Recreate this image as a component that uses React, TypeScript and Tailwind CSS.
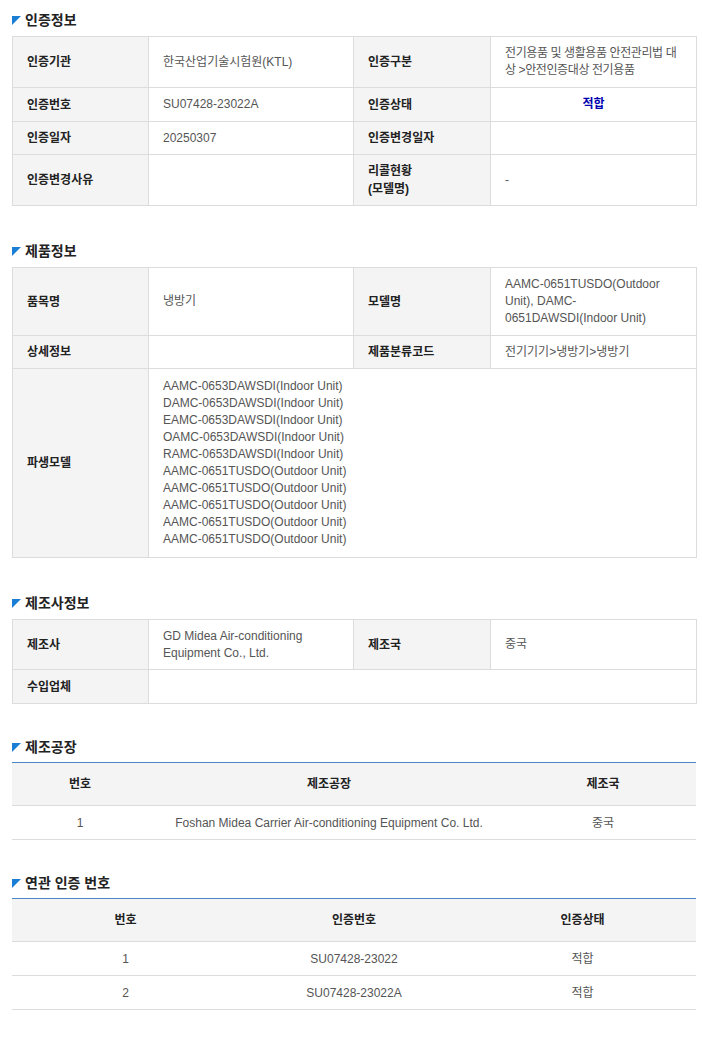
import React from "react";

const F = { fontFamily: '"Liberation Sans","Noto Sans CJK KR",sans-serif' };

function Title({ t }: { t: string }) {
  return (
    <div className="flex items-center gap-[4px] h-[20px] text-[14px] font-bold text-[#222]">
      <svg width="9" height="9" viewBox="0 0 9 9"><polygon points="0,0 9,0 0,9" fill="#1a7fd4" /></svg>
      {t}
    </div>
  );
}

const L = "bg-[#f4f4f4] border border-[#dcdcdc] px-[14px] text-[12px] font-bold text-[#222] align-middle text-left";
const V = "border border-[#dcdcdc] px-[14px] text-[12px] text-[#555] align-middle leading-[17px]";

function Info({ rows }: { rows: { h: number; c: (string | React.ReactNode)[] }[] }) {
  return (
    <table className="w-[684px] border-collapse table-fixed mt-[6px]">
      <colgroup><col className="w-[136px]" /><col className="w-[205px]" /><col className="w-[137px]" /><col className="w-[206px]" /></colgroup>
      <tbody>
        {rows.map((r, i) => (
          <tr key={i} style={{ height: r.h }}>
            {r.c.length === 2 ? (
              <>
                <th className={L}>{r.c[0]}</th>
                <td className={V} colSpan={3}>{r.c[1]}</td>
              </>
            ) : (
              <>
                <th className={L}>{r.c[0]}</th>
                <td className={V}>{r.c[1]}</td>
                <th className={L}>{r.c[2]}</th>
                <td className={V}>{r.c[3]}</td>
              </>
            )}
          </tr>
        ))}
      </tbody>
    </table>
  );
}

function List({ cols, head, rows }: { cols: number[]; head: string[]; rows: string[][] }) {
  return (
    <table className="w-[684px] border-collapse table-fixed mt-[5px] border-t border-t-[#4a86c5]">
      <colgroup>{cols.map((w, i) => <col key={i} style={{ width: w }} />)}</colgroup>
      <thead>
        <tr className="h-[43px] bg-[#f4f4f4]">
          {head.map((h, i) => <th key={i} className="text-[12px] font-bold text-[#222] text-center border-b border-[#dcdcdc]">{h}</th>)}
        </tr>
      </thead>
      <tbody>
        {rows.map((r, i) => (
          <tr key={i} className="h-[34px]">
            {r.map((c, j) => <td key={j} className="text-[12px] text-[#555] text-center border-b border-[#dcdcdc]">{c}</td>)}
          </tr>
        ))}
      </tbody>
    </table>
  );
}

export default function App() {
  const derived = [
    "AAMC-0653DAWSDI(Indoor Unit)", "DAMC-0653DAWSDI(Indoor Unit)", "EAMC-0653DAWSDI(Indoor Unit)",
    "OAMC-0653DAWSDI(Indoor Unit)", "RAMC-0653DAWSDI(Indoor Unit)", "AAMC-0651TUSDO(Outdoor Unit)",
    "AAMC-0651TUSDO(Outdoor Unit)", "AAMC-0651TUSDO(Outdoor Unit)", "AAMC-0651TUSDO(Outdoor Unit)",
    "AAMC-0651TUSDO(Outdoor Unit)",
  ];
  return (
    <div style={F} className="bg-white w-[702px] min-h-[1046px] pl-[12px] pt-[10px]">
      <Title t="인증정보" />
      <Info rows={[
        { h: 51, c: ["인증기관", "한국산업기술시험원(KTL)", "인증구분", <span className="tracking-[-0.4px] block">전기용품 및 생활용품 안전관리법 대상 &gt;안전인증대상 전기용품</span>] },
        { h: 34, c: ["인증번호", "SU07428-23022A", "인증상태", <div className="text-center font-bold text-[#0000b0]">적합</div>] },
        { h: 33, c: ["인증일자", "20250307", "인증변경일자", ""] },
        { h: 51, c: ["인증변경사유", "", <span className="leading-[18px] block">리콜현황<br />(모델명)</span>, "-"] },
      ]} />
      <div className="h-[35px]" />
      <Title t="제품정보" />
      <Info rows={[
        { h: 68, c: ["품목명", "냉방기", "모델명", "AAMC-0651TUSDO(Outdoor Unit), DAMC-0651DAWSDI(Indoor Unit)"] },
        { h: 33, c: ["상세정보", "", "제품분류코드", "전기기기>냉방기>냉방기"] },
        { h: 189, c: ["파생모델", <div>{derived.map((d, i) => <div key={i}>{d}</div>)}</div>] },
      ]} />
      <div className="h-[35px]" />
      <Title t="제조사정보" />
      <Info rows={[
        { h: 50, c: ["제조사", "GD Midea Air-conditioning Equipment Co., Ltd.", "제조국", "중국"] },
        { h: 34, c: ["수입업체", ""] },
      ]} />
      <div className="h-[33px]" />
      <Title t="제조공장" />
      <List cols={[136, 362, 186]} head={["번호", "제조공장", "제조국"]} rows={[["1", "Foshan Midea Carrier Air-conditioning Equipment Co. Ltd.", "중국"]]} />
      <div className="h-[33px]" />
      <Title t="연관 인증 번호" />
      <List cols={[227, 230, 227]} head={["번호", "인증번호", "인증상태"]} rows={[["1", "SU07428-23022", "적합"], ["2", "SU07428-23022A", "적합"]]} />
    </div>
  );
}
